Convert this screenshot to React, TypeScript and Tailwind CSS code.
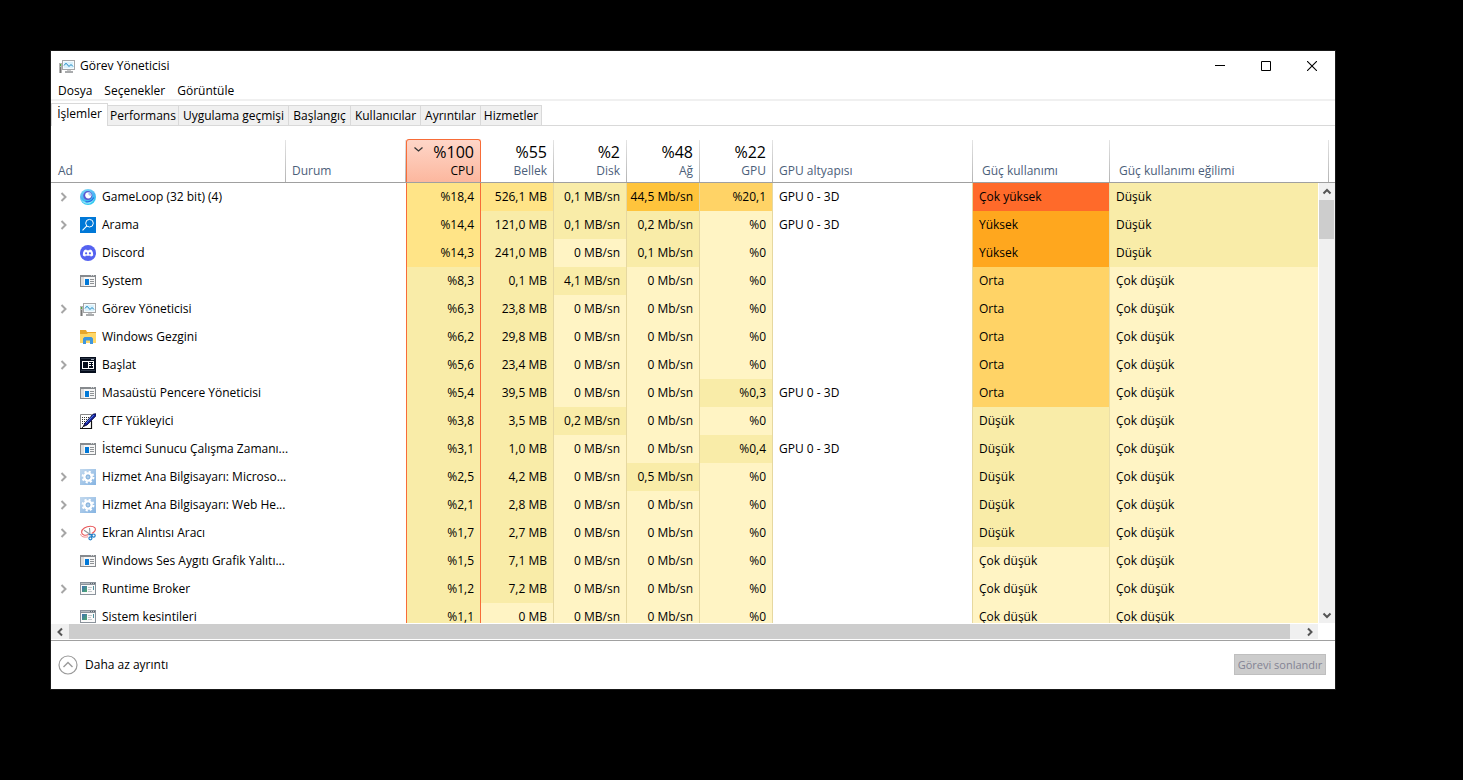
import type { ReactNode } from "react";

type Heat = "none" | "low" | "mid" | "warm" | "hot" | "amber" | "orange" | "red";

const heatClass: Record<Heat, string> = {
  none: "",
  low: "bg-[#fff4c4]",
  mid: "bg-[#f9eca8]",
  warm: "bg-[#ffe487]",
  hot: "bg-[#ffd366]",
  amber: "bg-[#ffc43c]",
  orange: "bg-[#ffa71e]",
  red: "bg-[#ff6a2a]",
};

function MonitorIcon() {
  return (
    <svg width="16" height="16" viewBox="0 0 16 16" className="shrink-0" aria-hidden="true">
      <rect x="0" y="5" width="3" height="10" fill="#b4b4b4" />
      <rect x="1" y="9" width="1" height="6" fill="#777" />
      <rect x="1" y="6" width="1" height="2" fill="#4fae3c" />
      <rect x="3.5" y="2.5" width="12" height="9" fill="#f4fbfe" stroke="#a4a6a8" />
      <rect x="5" y="4" width="9" height="6" fill="#d9f1fb" />
      <path d="M5 7.500l2-2.300L10 8.500l2-2L14 8.500" fill="none" stroke="#1b87c4" />
      <path d="M8 12h4v1H8z" fill="#c8c9ca" />
      <path d="M6 13h8v2H6z" fill="#a9abad" />
    </svg>
  );
}

function GameLoopIcon() {
  return (
    <svg width="16" height="16" viewBox="0 0 16 16" className="shrink-0" aria-hidden="true">
      <defs>
        <linearGradient id="gameloop" x1="0" y1="0" x2="0.4" y2="1">
          <stop offset="0" stopColor="#7fdcf8" />
          <stop offset="0.55" stopColor="#4fb4f2" />
          <stop offset="1" stopColor="#2fc8f0" />
        </linearGradient>
      </defs>
      <circle cx="8" cy="8" r="8" fill="url(#gameloop)" />
      <path d="M.6 9.500c1.800 3 5 4.200 8.400 3.300 2.600-.7 4.400-2.300 5.200-4.600-.4 4.100-3.200 6.600-6.600 6.600-3.200 0-6-2-7-5.300z" fill="#8eeafa" />
      <path d="M5.500 12.600c3.800.8 6.800-.8 8.200-4" stroke="#2a6be0" strokeWidth="1.300" fill="none" />
      <circle cx="7.800" cy="6.600" r="4.500" fill="#5a55cf" />
      <circle cx="8.300" cy="6.300" r="3.100" fill="#fff" />
      <path d="M8.600 3.200a3.100 3.100 0 0 1 2.800 3.600c-1.600.3-2.900-.7-3.100-1.900z" fill="#a8c4f4" />
    </svg>
  );
}

function SearchAppIcon() {
  return (
    <svg width="16" height="16" viewBox="0 0 16 16" className="shrink-0" aria-hidden="true">
      <rect width="16" height="16" fill="#0078d7" />
      <circle cx="9.500" cy="6.200" r="3.800" fill="none" stroke="#fff" />
      <path d="M6.900 8.900L2.500 13.300" stroke="#fff" strokeWidth="1.100" />
    </svg>
  );
}

function DiscordIcon() {
  return (
    <svg width="16" height="16" viewBox="0 0 16 16" className="shrink-0" aria-hidden="true">
      <circle cx="8" cy="8" r="8" fill="#5562f0" />
      <path
        d="M6.300 4.600c-.9.100-1.700.4-2.300.8-1 1.700-1.300 3.400-1.100 5 .8.6 1.600.9 2.400 1.100l.6-1c1.300.4 2.900.4 4.200 0l.6 1c.8-.2 1.600-.5 2.400-1.100.2-1.600-.1-3.300-1.100-5-.6-.4-1.400-.7-2.300-.8l-.4.700a7 7 0 0 0-2.600 0z"
        fill="#fff"
      />
      <circle cx="6.100" cy="8.300" r="1.100" fill="#5562f0" />
      <circle cx="9.900" cy="8.300" r="1.100" fill="#5562f0" />
    </svg>
  );
}

function ServiceWindowIcon() {
  return (
    <svg width="16" height="16" viewBox="0 0 16 16" shapeRendering="crispEdges" className="shrink-0" aria-hidden="true">
      <rect x="0" y="2" width="16" height="12" fill="#868a8e" />
      <path d="M11 2h1v1h-1zM13 2h1v1h-1z" fill="#d0d2d4" />
      <rect x="1" y="4" width="14" height="9" fill="#f6f6f6" />
      <rect x="1" y="4" width="3" height="9" fill="#dedede" />
      <rect x="5" y="6" width="4" height="6" fill="#0078d7" />
      <path d="M10 6h4v1h-4zM10 8h4v1h-4zM10 10h4v1h-4z" fill="#8f9396" />
    </svg>
  );
}

function FolderIcon() {
  return (
    <svg width="16" height="16" viewBox="0 0 16 16" className="shrink-0" aria-hidden="true">
      <path d="M0 1h6l1 2h9v3H0z" fill="#e8a72c" />
      <path d="M0 5h7l1-1h8v10H0z" fill="#ffd767" />
      <path d="M3 15V9.500L4.500 8h7L13 9.500V15h-3v-3.500H6V15z" fill="#3f96dd" />
    </svg>
  );
}

function StartIcon() {
  return (
    <svg width="16" height="16" viewBox="0 0 16 16" shapeRendering="crispEdges" className="shrink-0" aria-hidden="true">
      <rect width="16" height="16" fill="#050d1c" />
      <path d="M1 1h14v1H1zM1 13h14v1H1z" fill="#2c3647" />
      <path d="M11 2h3v1h-3z" fill="#a9b1bd" />
      <path d="M2 4h12v8H2zM3 5v6h5V5zM9 5v6h4V5z" fill="#fff" fillRule="evenodd" />
      <path d="M9 6h2v1H9zM12 6h1v1h-1zM9 8h2v1H9zM12 8h1v1h-1z" fill="#fff" />
    </svg>
  );
}

function PenIcon() {
  return (
    <svg width="16" height="16" viewBox="0 0 16 16" className="shrink-0" aria-hidden="true">
      <path d="M.5 1.500h11v14H.5z" fill="#fff" stroke="#888" />
      <path d="M11.500 8v7.500H0" fill="none" stroke="#111" strokeWidth="1.200" />
      <path d="M2 4.500h8M2 6.500h7M2 8.500h5M2 10.500h3" stroke="#333" strokeDasharray="1 1" />
      <path d="M3.500 13.500l1.300-3.300L13.300 1 16 .8v2L7 12z" fill="#15209c" stroke="#00002e" strokeWidth=".8" />
      <path d="M6 10l7.800-8" stroke="#4d7cf0" />
      <path d="M2 15l2.500-3" stroke="#111" />
    </svg>
  );
}

function GearIcon() {
  return (
    <svg width="16" height="16" viewBox="0 0 16 16" className="shrink-0" aria-hidden="true">
      <defs>
        <linearGradient id="gear" x1="0" y1="0" x2="1" y2="1">
          <stop offset="0" stopColor="#c3d9ee" />
          <stop offset="1" stopColor="#86b4e2" />
        </linearGradient>
      </defs>
      <rect width="16" height="16" fill="url(#gear)" />
      <circle cx="8" cy="8" r="5.400" fill="none" stroke="#fff" strokeWidth="2" strokeDasharray="2.120 2.120" />
      <circle cx="8" cy="8" r="3.600" fill="none" stroke="#fff" strokeWidth="2.400" />
      <circle cx="8" cy="8" r="2.400" fill="#8fb8df" />
      <circle cx="8" cy="8" r="1" fill="#b9d4ee" />
    </svg>
  );
}

function SnipIcon() {
  return (
    <svg width="16" height="16" viewBox="0 0 16 16" className="shrink-0" aria-hidden="true">
      <path d="M8.500 9.500C5 11 1.700 9.800 1.600 7.300 1.500 4 6 1.300 10.500 1.300c4 0 5.800 2.300 4.400 4.600-.7 1.200-2 2-3.200 2.500" fill="#fff" stroke="#e8585a" strokeWidth="1.100" />
      <path d="M.6 9c.2 2.700 3.600 3.700 7.400 2.800" fill="none" stroke="#f08a8a" />
      <path d="M4 5.300l6 4M9.500 3l.5 6" stroke="#90969a" strokeWidth="1.100" />
      <circle cx="13.600" cy="10.600" r="1.600" fill="none" stroke="#2380c8" strokeWidth="1.200" />
      <circle cx="10.400" cy="13.300" r="1.500" fill="none" stroke="#2380c8" strokeWidth="1.200" />
      <path d="M8.500 9.600h3.500M11.300 9.500v3" stroke="#2380c8" strokeWidth="1.200" />
    </svg>
  );
}

function BrokerIcon() {
  return (
    <svg width="16" height="16" viewBox="0 0 16 16" shapeRendering="crispEdges" className="shrink-0" aria-hidden="true">
      <defs>
        <linearGradient id="broker" x1="0" y1="0" x2="1" y2="1">
          <stop offset="0" stopColor="#3f6fb4" />
          <stop offset="1" stopColor="#4cab6c" />
        </linearGradient>
      </defs>
      <rect x="0" y="1" width="16" height="13" fill="#8b939b" />
      <rect x="1" y="2" width="14" height="1" fill="#b6bcc2" />
      <path d="M10 2h1v1h-1zM12 2h1v1h-1zM14 2h1v1h-1z" fill="#5d656d" />
      <rect x="1" y="4" width="14" height="9" fill="#fafafa" />
      <rect x="2" y="5" width="5" height="6" fill="url(#broker)" />
      <path d="M8 6h4v1H8zM8 8h3v1H8zM8 10h4v1H8z" fill="#c3c7ca" />
      <rect x="13" y="5" width="1" height="4" fill="#4d8f9c" />
    </svg>
  );
}

function Chevron({ d, className }: { d: string; className: string }) {
  return (
    <svg width="10" height="10" viewBox="0 0 10 10" className={className} aria-hidden="true">
      <path d={d} fill="none" stroke="currentColor" strokeWidth="2" />
    </svg>
  );
}

const EXPAND = "M2.500 1l4 4-4 4";
const LEFT = "M7 1.500L3.500 5 7 8.500";
const RIGHT = "M3 1.500L6.500 5 3 8.500";
const UP = "M1.500 6.500L5 3l3.500 3.500";
const DOWN = "M1.500 3.500L5 7l3.500-3.500";

type Row = {
  name: string;
  icon: ReactNode;
  group?: boolean;
  cpu: [string, Heat];
  mem: [string, Heat];
  disk: [string, Heat];
  net: [string, Heat];
  gpu: [string, Heat];
  engine?: string;
  power: [string, Heat];
  trend: [string, Heat];
};

const calm: [string, Heat] = ["Çok düşük", "low"];
const slight: [string, Heat] = ["Düşük", "mid"];
const medium: [string, Heat] = ["Orta", "hot"];
const noDisk: [string, Heat] = ["0 MB/sn", "low"];
const noNet: [string, Heat] = ["0 Mb/sn", "low"];
const noGpu: [string, Heat] = ["%0", "low"];

const rows: Row[] = [
  { name: "GameLoop (32 bit) (4)", icon: <GameLoopIcon />, group: true, cpu: ["%18,4", "warm"], mem: ["526,1 MB", "warm"], disk: ["0,1 MB/sn", "mid"], net: ["44,5 Mb/sn", "amber"], gpu: ["%20,1", "hot"], engine: "GPU 0 - 3D", power: ["Çok yüksek", "red"], trend: slight },
  { name: "Arama", icon: <SearchAppIcon />, group: true, cpu: ["%14,4", "warm"], mem: ["121,0 MB", "mid"], disk: ["0,1 MB/sn", "mid"], net: ["0,2 Mb/sn", "mid"], gpu: noGpu, engine: "GPU 0 - 3D", power: ["Yüksek", "orange"], trend: slight },
  { name: "Discord", icon: <DiscordIcon />, cpu: ["%14,3", "warm"], mem: ["241,0 MB", "mid"], disk: noDisk, net: ["0,1 Mb/sn", "mid"], gpu: noGpu, power: ["Yüksek", "orange"], trend: slight },
  { name: "System", icon: <ServiceWindowIcon />, cpu: ["%8,3", "mid"], mem: ["0,1 MB", "mid"], disk: ["4,1 MB/sn", "mid"], net: noNet, gpu: noGpu, power: medium, trend: calm },
  { name: "Görev Yöneticisi", icon: <MonitorIcon />, group: true, cpu: ["%6,3", "mid"], mem: ["23,8 MB", "mid"], disk: noDisk, net: noNet, gpu: noGpu, power: medium, trend: calm },
  { name: "Windows Gezgini", icon: <FolderIcon />, cpu: ["%6,2", "mid"], mem: ["29,8 MB", "mid"], disk: noDisk, net: noNet, gpu: noGpu, power: medium, trend: calm },
  { name: "Başlat", icon: <StartIcon />, group: true, cpu: ["%5,6", "mid"], mem: ["23,4 MB", "mid"], disk: noDisk, net: noNet, gpu: noGpu, power: medium, trend: calm },
  { name: "Masaüstü Pencere Yöneticisi", icon: <ServiceWindowIcon />, cpu: ["%5,4", "mid"], mem: ["39,5 MB", "mid"], disk: noDisk, net: noNet, gpu: ["%0,3", "mid"], engine: "GPU 0 - 3D", power: medium, trend: calm },
  { name: "CTF Yükleyici", icon: <PenIcon />, cpu: ["%3,8", "mid"], mem: ["3,5 MB", "mid"], disk: ["0,2 MB/sn", "mid"], net: noNet, gpu: noGpu, power: slight, trend: calm },
  { name: "İstemci Sunucu Çalışma Zamanı...", icon: <ServiceWindowIcon />, cpu: ["%3,1", "mid"], mem: ["1,0 MB", "mid"], disk: noDisk, net: noNet, gpu: ["%0,4", "mid"], engine: "GPU 0 - 3D", power: slight, trend: calm },
  { name: "Hizmet Ana Bilgisayarı: Microso...", icon: <GearIcon />, group: true, cpu: ["%2,5", "mid"], mem: ["4,2 MB", "mid"], disk: noDisk, net: ["0,5 Mb/sn", "mid"], gpu: noGpu, power: slight, trend: calm },
  { name: "Hizmet Ana Bilgisayarı: Web He...", icon: <GearIcon />, group: true, cpu: ["%2,1", "mid"], mem: ["2,8 MB", "mid"], disk: noDisk, net: noNet, gpu: noGpu, power: slight, trend: calm },
  { name: "Ekran Alıntısı Aracı", icon: <SnipIcon />, group: true, cpu: ["%1,7", "mid"], mem: ["2,7 MB", "mid"], disk: noDisk, net: noNet, gpu: noGpu, power: slight, trend: calm },
  { name: "Windows Ses Aygıtı Grafik Yalıtı...", icon: <ServiceWindowIcon />, cpu: ["%1,5", "mid"], mem: ["7,1 MB", "mid"], disk: noDisk, net: noNet, gpu: noGpu, power: calm, trend: calm },
  { name: "Runtime Broker", icon: <BrokerIcon />, group: true, cpu: ["%1,2", "mid"], mem: ["7,2 MB", "mid"], disk: noDisk, net: noNet, gpu: noGpu, power: calm, trend: calm },
  { name: "Sistem kesintileri", icon: <BrokerIcon />, cpu: ["%1,1", "mid"], mem: ["0 MB", "low"], disk: noDisk, net: noNet, gpu: noGpu, power: calm, trend: calm },
];

const tabs = [
  { label: "Performans", width: "w-[71px]" },
  { label: "Uygulama geçmişi", width: "w-[110px]" },
  { label: "Başlangıç", width: "w-[62px]" },
  { label: "Kullanıcılar", width: "w-[70px]" },
  { label: "Ayrıntılar", width: "w-[60px]" },
  { label: "Hizmetler", width: "w-[61px]" },
];

const meters = [
  { value: "%55", label: "Bellek" },
  { value: "%2", label: "Disk" },
  { value: "%48", label: "Ağ" },
  { value: "%22", label: "GPU" },
];

function Divider() {
  return <span className="absolute right-0 bottom-0 h-[42px] w-px bg-linear-to-b from-[#e4e4e4] to-[#b4b4b4]" />;
}

function TextHeader({ label, pad }: { label: string; pad: string }) {
  return (
    <th scope="col" className={`relative border-b border-[#a0a0a0] pb-[3px] text-left align-bottom font-normal text-[#4c607a] ${pad}`}>
      {label}
      <Divider />
    </th>
  );
}

function Meter({ cell }: { cell: [string, Heat] }) {
  return (
    <td className={`border-r border-[#e6d8a0] pr-1.5 text-right ${heatClass[cell[1]]}`}>{cell[0]}</td>
  );
}

function ProcessTable() {
  return (
    <table className="w-full table-fixed border-separate border-spacing-0 whitespace-nowrap">
      <colgroup>
        <col className="w-[235px]" />
        <col className="w-[120px]" />
        <col className="w-[75px]" />
        <col className="w-[73px]" />
        <col className="w-[73px]" />
        <col className="w-[73px]" />
        <col className="w-[73px]" />
        <col className="w-[200px]" />
        <col className="w-[137px]" />
        <col />
      </colgroup>
      <thead>
        <tr className="h-[57px]">
          <TextHeader label="Ad" pad="pl-[7px]" />
          <TextHeader label="Durum" pad="pl-1.5" />
          <th scope="col" className="border-b border-[#a0a0a0] p-0 pt-[13px] align-bottom font-normal">
            <button className="flex h-[43px] w-full flex-col items-end justify-end rounded-t-[3px] border border-b-0 border-[#f76c38] bg-linear-to-b from-[#fed6c8] to-[#fcb79e] pr-1.5 pb-[3px]">
              <span className="flex w-full items-center justify-between pl-1.5">
                <svg width="10" height="10" viewBox="0 0 10 10" className="-mt-1" aria-hidden="true">
                  <path d="M1.500 2.500L5.500 6 9.500 2.500" fill="none" stroke="#333" strokeWidth="1.300" />
                </svg>
                <span className="text-[16px] leading-[22px]">%100</span>
              </span>
              <span className="leading-4">CPU</span>
            </button>
          </th>
          {meters.map((m) => (
            <th key={m.label} scope="col" className="relative border-b border-[#a0a0a0] pr-[7px] pb-[3px] text-right align-bottom font-normal">
              <span className="block text-[16px] leading-[22px]">{m.value}</span>
              <span className="block text-[#4c607a]">{m.label}</span>
              <Divider />
            </th>
          ))}
          <TextHeader label="GPU altyapısı" pad="pl-1.5" />
          <TextHeader label="Güç kullanımı" pad="pl-[9px]" />
          <th scope="col" className="border-b border-[#a0a0a0] pb-[3px] pl-[9px] text-left align-bottom font-normal text-[#4c607a]">
            Güç kullanımı eğilimi
          </th>
        </tr>
      </thead>
      <tbody>
        {rows.map((r) => (
          <tr key={r.name} className="h-7">
            <td className="p-0">
              <div className="flex items-center pl-2">
                {r.group ? (
                  <button aria-label={`${r.name} genişlet`} className="mr-[11px] text-[#a6a6a6]">
                    <Chevron d={EXPAND} className="block" />
                  </button>
                ) : (
                  <span className="mr-[11px] w-2.5 shrink-0" />
                )}
                {r.icon}
                <span className="ml-1.5">{r.name}</span>
              </div>
            </td>
            <td className="p-0" />
            <td className={`border-x border-[#f76c38] pr-1.5 text-right ${heatClass[r.cpu[1]]}`}>{r.cpu[0]}</td>
            <Meter cell={r.mem} />
            <Meter cell={r.disk} />
            <Meter cell={r.net} />
            <Meter cell={r.gpu} />
            <td className="border-r border-[#e6d8a0] pl-1.5">{r.engine}</td>
            <td className={`border-r border-[#eadfa8] pl-1.5 ${heatClass[r.power[1]]}`}>{r.power[0]}</td>
            <td className={`pl-1.5 ${heatClass[r.trend[1]]}`}>{r.trend[0]}</td>
          </tr>
        ))}
      </tbody>
    </table>
  );
}

export default function App() {
  return (
    <div className="flex h-screen overflow-hidden bg-black pt-[50px] pr-[127px] pb-[90px] pl-[50px] font-['Open_Sans','Noto_Sans',sans-serif] text-[12px] leading-4 text-black">
      <main className="flex min-w-0 flex-1 flex-col border border-[#191919] bg-white">
        <header className="flex h-[29px] items-center pl-2">
          <MonitorIcon />
          <h1 className="ml-[5px]">Görev Yöneticisi</h1>
          <div className="ml-auto flex">
            <button aria-label="Simge durumuna küçült" className="flex h-7 w-[46px] items-center justify-center">
              <svg width="10" height="10" viewBox="0 0 10 10"><path d="M0 4.500h10" stroke="#000" /></svg>
            </button>
            <button aria-label="Ekranı kapla" className="flex h-7 w-[46px] items-center justify-center">
              <svg width="10" height="10" viewBox="0 0 10 10"><path d="M.5.5h9v9h-9z" fill="none" stroke="#000" /></svg>
            </button>
            <button aria-label="Kapat" className="flex h-7 w-[46px] items-center justify-center">
              <svg width="10" height="10" viewBox="0 0 10 10"><path d="M0 0l10 10M10 0L0 10" stroke="#000" strokeWidth="1.100" /></svg>
            </button>
          </div>
        </header>
        <nav className="flex h-[21px] items-end gap-3 border-b-2 border-[#f0f0f0] pl-[7px]">
          <button>Dosya</button>
          <button>Seçenekler</button>
          <button>Görüntüle</button>
        </nav>
        <div role="tablist" className="flex h-[25px] items-end border-b border-[#d9d9d9]">
          <button role="tab" aria-selected="true" className="-mb-px h-[23px] w-[57px] border border-b-0 border-[#d9d9d9] bg-white pb-0.5">
            İşlemler
          </button>
          {tabs.map((t) => (
            <button key={t.label} role="tab" aria-selected="false" className={`h-5 border-t border-r border-[#d9d9d9] bg-[#f0f0f0] whitespace-nowrap ${t.width}`}>
              {t.label}
            </button>
          ))}
        </div>
        <div className="flex min-h-0 flex-1">
          <div className="min-w-0 flex-1 overflow-hidden">
            <ProcessTable />
          </div>
          <div className="flex w-[17px] flex-col">
            <div className="h-[57px] shrink-0 border-b border-[#a0a0a0] pr-1.5">
              <div className="ml-auto flex h-full w-px items-end">
                <span className="h-[42px] w-px bg-linear-to-b from-[#e4e4e4] to-[#b4b4b4]" />
              </div>
            </div>
            <div className="ml-px flex flex-1 flex-col items-center bg-[#f0f0f0] text-[#555]">
              <button aria-label="Yukarı kaydır" className="flex h-[17px] items-center">
                <Chevron d={UP} className="block" />
              </button>
              <div className="mr-px h-[39px] w-[15px] bg-[#cdcdcd]" />
              <button aria-label="Aşağı kaydır" className="mt-auto flex h-[17px] items-center">
                <Chevron d={DOWN} className="block" />
              </button>
            </div>
          </div>
        </div>
        <div className="flex h-[18px] border-b border-[#a0a0a0] pt-px pb-px">
          <div className="mr-[17px] flex flex-1 bg-[#f0f0f0] text-[#555]">
            <button aria-label="Sola kaydır" className="flex w-[18px] items-center justify-center">
              <Chevron d={LEFT} className="block" />
            </button>
            <div className="flex-1 bg-[#cdcdcd]" />
            <button aria-label="Sağa kaydır" className="flex w-7 items-center justify-end pr-[3px]">
              <Chevron d={RIGHT} className="block" />
            </button>
          </div>
        </div>
        <footer className="flex h-[47px] items-center justify-between pr-[9px] pl-[7px]">
          <button className="flex items-center gap-[7px]">
            <svg width="20" height="20" viewBox="0 0 20 20" aria-hidden="true">
              <circle cx="10" cy="10" r="9" fill="none" stroke="#9a9a9a" strokeWidth="1.200" />
              <path d="M5.500 12L10 7.500l4.500 4.500" fill="none" stroke="#9a9a9a" strokeWidth="1.400" />
            </svg>
            Daha az ayrıntı
          </button>
          <button disabled className="h-[21px] w-[92px] border border-[#bfbfbf] bg-[#cccccc] text-[11px] whitespace-nowrap text-[#838393]">
            Görevi sonlandır
          </button>
        </footer>
        <div className="h-px" />
      </main>
    </div>
  );
}
